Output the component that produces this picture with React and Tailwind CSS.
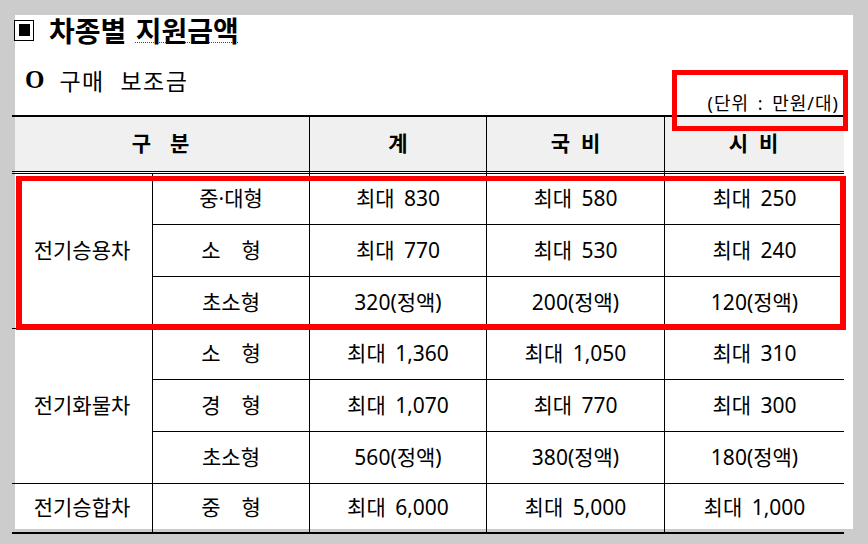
const groups = [
  {
    name: '전기승용차',
    rows: [
      ['중·대형', '최대 830', '최대 580', '최대 250'],
      ['소　형', '최대 770', '최대 530', '최대 240'],
      ['초소형', '320(정액)', '200(정액)', '120(정액)'],
    ],
  },
  {
    name: '전기화물차',
    rows: [
      ['소　형', '최대 1,360', '최대 1,050', '최대 310'],
      ['경　형', '최대 1,070', '최대 770', '최대 300'],
      ['초소형', '560(정액)', '380(정액)', '180(정액)'],
    ],
  },
  {
    name: '전기승합차',
    rows: [['중　형', '최대 6,000', '최대 5,000', '최대 1,000']],
  },
];

const Cell = ({ children, last, bottom, className = '' }) => (
  <div
    className={
      'flex items-center justify-center border-black ' +
      (last ? '' : 'border-r ') +
      (bottom ? 'border-b-2 ' : 'border-b ') +
      className
    }
  >
    {children}
  </div>
);

const SubsidyTable = () => {
  return (
    <div className="ml-[-3px] mt-[2px] grid w-[832px] grid-cols-[141px_157px_177px_178px_179px] grid-rows-[59px_51px_52px_52px_51px_52px_52px_50px] font-['Noto_Sans','Noto_Sans_CJK_KR',sans-serif] text-[21px] text-black [word-spacing:4px]">
      {/* 헤더 */}
      <div className="col-span-2 flex items-center justify-center gap-[19px] border-r border-t-2 border-b-[3px] border-black bg-[linear-gradient(to_right,transparent_3px,#f0f0f0_3px)] bg-clip-padding font-bold [border-bottom-style:double]">
        <span>구</span>
        <span>분</span>
      </div>
      <div className="flex items-center justify-center border-r border-t-2 border-b-[3px] border-black bg-[#f0f0f0] bg-clip-padding font-bold [border-bottom-style:double]">
        계
      </div>
      <div className="flex items-center justify-center gap-[11px] border-r border-t-2 border-b-[3px] border-black bg-[#f0f0f0] bg-clip-padding font-bold [border-bottom-style:double]">
        <span>국</span>
        <span>비</span>
      </div>
      <div className="flex items-center justify-center gap-[11px] border-t-2 border-b-[3px] border-black bg-[#f0f0f0] bg-clip-padding pr-[2px] font-bold [border-bottom-style:double]">
        <span>시</span>
        <span>비</span>
      </div>

      {/* 본문 */}
      {groups.map((g, gi) => {
        const lastGroup = gi === groups.length - 1;
        return [
          <Cell
            key={g.name}
            bottom={lastGroup}
            className={g.rows.length === 3 ? 'row-span-3' : 'row-span-1'}
          >
            {g.name}
          </Cell>,
          ...g.rows.flatMap((r, ri) =>
            r.map((v, ci) => (
              <Cell
                key={g.name + ri + ci}
                last={ci === 3}
                bottom={lastGroup && ri === g.rows.length - 1}
              >
                {v}
              </Cell>
            ))
          ),
        ];
      })}
    </div>
  );
};

export default function App() {
  return (
    <div className="h-[544px] w-[868px] overflow-hidden bg-[#cccccc] pl-[15px] pt-[15px] font-['Noto_Sans_CJK_KR',sans-serif]">
      <div className="relative h-[514px] w-[838px] bg-white">
        {/* 제목 */}
        <div className="flex h-[30px] items-center">
          <div className="ml-[-1px] flex h-[21px] w-[20px] items-center justify-center border border-black">
            <div className="h-[12px] w-[11px] bg-black" />
          </div>
          <h1 className="ml-[15px] text-[28px] font-bold leading-[30px] text-black [word-spacing:3px]">
            차종별{' '}
            <span className="underline decoration-[#ff0000] decoration-dotted decoration-1 underline-offset-[0px]">
              지원금액
            </span>
          </h1>
        </div>

        {/* 소제목 */}
        <div className="mt-[22px] flex h-[26px] items-center">
          <span className="ml-[10px] font-['Liberation_Serif',serif] text-[25px] font-bold leading-[26px]">
            O
          </span>
          <span className="ml-[15px] text-[23px] leading-[26px] tracking-[1.5px] [word-spacing:9px]">
            구매 보조금
          </span>
        </div>

        {/* 단위 */}
        <div className="flex h-[20px] items-center justify-end pr-[14px] font-['Noto_Sans','Noto_Sans_CJK_KR',sans-serif] text-[18px] leading-[20px] tracking-[1px] [word-spacing:3px]">
          (단위 : 만원/대)
        </div>

        <SubsidyTable />

        {/* 강조 표시 */}
        <div className="absolute left-[657px] top-[55px] h-[61px] w-[176px] border-[5px] border-[#ff0000]" />
        <div className="absolute left-[1px] top-[161px] h-[154px] w-[830px] border-[6px] border-t-[5px] border-[#ff0000]" />
      </div>
    </div>
  );
}
